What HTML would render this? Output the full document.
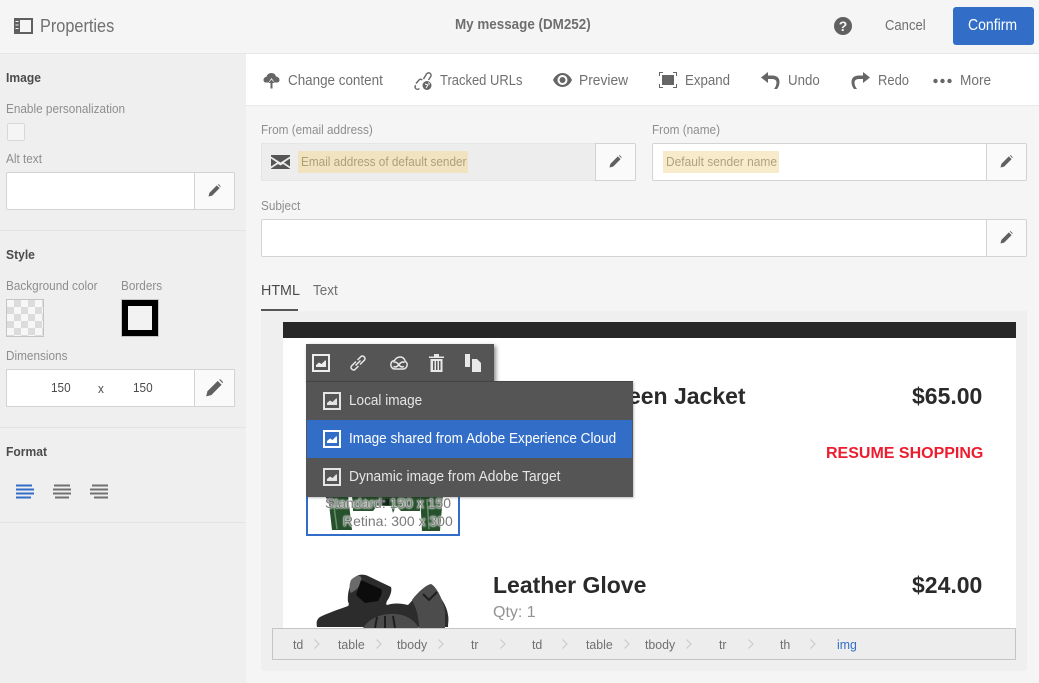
<!DOCTYPE html>
<html><head><meta charset="utf-8"><style>
html,body{margin:0;padding:0;width:1039px;height:683px;overflow:hidden;background:#f5f5f5;font-family:"Liberation Sans",sans-serif}
div,span,svg{position:absolute;box-sizing:border-box}
.t{white-space:nowrap;line-height:20px;transform:scaleX(.905);transform-origin:0 50%}
.n{transform:none}
.lab{font-size:13px;color:#8e8e8e}
.h{font-size:13px;font-weight:bold;color:#4b4b4b;transform:scaleX(.93)}
.tb{font-size:15px;color:#707070;transform:scaleX(.885)}
.ed{border:1px solid #d3d3d3;border-radius:2px;background:#fff}
.pb{background:#fafafa;border:1px solid #d3d3d3;border-radius:0 2px 2px 0}
.bc{font-size:13px;color:#707070;transform:scaleX(.95)}
.c{width:6px;height:10px;top:639px}
.b{font-size:23px;font-weight:bold;color:#2a2a2a;line-height:24px;transform:none}
</style></head><body>
<svg width="0" height="0" style="position:absolute"><defs>
<symbol id="pen" viewBox="0 0 14 14"><path d="M0.500 13.500l1-4 8-8 3 3-8 8z" fill="#606060"/><path d="M10.500 0.500l1-.3 2.100 2.100-.3 1z" fill="#606060"/></symbol>
<symbol id="imgi" viewBox="0 0 18 18"><path fill-rule="evenodd" d="M0 0h18v18H0zM2 2v14h14V2z" fill="currentColor"/><path d="M4 13v-2l3-2.500 2.500 1.500L13 6.500h1V13z" fill="currentColor"/></symbol>
<symbol id="chev" viewBox="0 0 6 10"><path d="M.5.500L5 5 .5 9.500" fill="none" stroke="#c8c8c8" stroke-width="1"/></symbol>
</defs></svg>

<!-- top bar -->
<div style="left:0;top:0;width:1039px;height:54px;background:#f5f5f5;border-bottom:1px solid #e6e6e6"></div>
<svg style="left:14px;top:18px" width="19" height="16" viewBox="0 0 19 16"><path fill-rule="evenodd" d="M0 0h19v16H0zM6 2v12h11V2z" fill="#606060"/><path d="M1.500 3.500h3M1.500 7h3M1.500 10.500h3" stroke="#f5f5f5" stroke-width="1"/></svg>
<span class="t" style="left:40px;top:16px;font-size:18px;color:#707070">Properties</span>
<span class="t" style="left:455px;top:15px;font-size:14.500px;font-weight:bold;color:#6e6e6e;transform:scaleX(.925)">My message (DM252)</span>
<div style="left:834px;top:17px;width:18px;height:18px;border-radius:50%;background:#606060;color:#f5f5f5;font-size:14px;font-weight:bold;line-height:18px;text-align:center">?</div>
<span class="t" style="left:885px;top:16px;font-size:15px;color:#707070;transform:scaleX(.87)">Cancel</span>
<div style="left:953px;top:7px;width:81px;height:38px;background:#326ec8;border-radius:3px"></div>
<span class="t" style="left:968px;top:16px;color:#fff;font-size:15.500px;">Confirm</span>

<!-- left panel -->
<div style="left:0;top:54px;width:246px;height:629px;background:#efefef"></div>
<span class="t h" style="left:6px;top:68px">Image</span>
<span class="t lab" style="left:6px;top:99px">Enable personalization</span>
<div style="left:7px;top:123px;width:18px;height:18px;background:#f5f5f5;border:1px solid #d8d8d8;border-radius:2px"></div>
<span class="t lab" style="left:6px;top:149px">Alt text</span>
<div class="ed" style="left:6px;top:172px;width:189px;height:38px;border-radius:2px 0 0 2px"></div>
<div class="pb" style="left:194px;top:172px;width:41px;height:38px"></div>
<svg style="left:208px;top:184px" width="13" height="13"><use href="#pen"/></svg>
<div style="left:0;top:230px;width:246px;height:1px;background:#e3e3e3"></div>
<span class="t h" style="left:6px;top:245px">Style</span>
<span class="t lab" style="left:6px;top:276px">Background color</span>
<span class="t lab" style="left:121px;top:276px">Borders</span>
<div style="left:6px;top:299px;width:38px;height:38px;border:1px solid #c4c4c4;background:#f2f2f2 conic-gradient(#dcdcdc 25%,#f7f7f7 0 50%,#dcdcdc 0 75%,#f7f7f7 0) 0 0/14px 14px"></div>
<div style="left:121px;top:299px;width:38px;height:38px;border:1px solid #c4c4c4;background:#000"><div style="left:6px;top:6px;width:24px;height:24px;background:#f2f2f2"></div></div>
<span class="t lab" style="left:6px;top:346px">Dimensions</span>
<div class="ed" style="left:6px;top:369px;width:189px;height:38px;border-radius:0"></div>
<div class="pb" style="left:194px;top:369px;width:41px;height:38px;border-radius:0"></div>
<svg style="left:205px;top:379px" width="19" height="18"><use href="#pen"/></svg>
<span class="t" style="left:51px;top:378px;font-size:13px;color:#4b4b4b">150</span>
<span class="t" style="left:98px;top:379px;font-size:13px;color:#4b4b4b">x</span>
<span class="t" style="left:133px;top:378px;font-size:13px;color:#4b4b4b">150</span>
<div style="left:0;top:427px;width:246px;height:1px;background:#e3e3e3"></div>
<span class="t h" style="left:6px;top:442px">Format</span>
<svg style="left:16px;top:484px" width="94" height="17">
<g stroke="#326ec8" stroke-width="2"><path d="M0 1.500h16M0 5.500h18M0 9.500h18M0 13.500h15"/></g>
<g stroke="#707070" stroke-width="2"><path d="M38 1.500h16M37 5.500h18M37 9.500h18M39 13.500h14"/></g>
<g stroke="#707070" stroke-width="2"><path d="M76 1.500h16M74 5.500h18M74 9.500h18M78 13.500h14"/></g>
</svg>
<div style="left:0;top:522px;width:246px;height:1px;background:#e3e3e3"></div>

<!-- toolbar -->
<div style="left:246px;top:54px;width:793px;height:52px;background:#fff;border-bottom:1px solid #e9e9e9"></div>
<svg style="left:263px;top:72px" width="17" height="17" viewBox="0 0 17 17"><path d="M8.500 1c2.500 0 4 1.500 4.500 3.500 2 .2 3.500 1.700 3.500 3.500 0 1.700-1.100 2.500-2.500 2.500h-2.500L8.500 6 5.500 10.500H3C1.500 10.500.5 9.500.5 8c0-1.600 1.200-2.900 3-3.200C4 2.500 6 1 8.500 1z" fill="#666"/><path d="M8.500 7.500l3 3.500h-2v5.500h-2V11h-2z" fill="#666"/></svg>
<span class="t tb" style="left:288px;top:71px;transform:scaleX(.895)">Change content</span>
<svg style="left:414px;top:71px" width="19" height="20" viewBox="0 0 19 20" fill="none"><path d="M2 12.500l3-3.500c1-1 2.200-1 3.200 0M5.500 17.500c-1.500 1.200-3 1-3.800 0-.8-1-.8-2.300 0-3.300M9.500 8l3-5c1-1.300 2.600-1.500 3.700-.6 1.100.9 1.100 2.400.3 3.500L14.500 9" stroke="#666" stroke-width="1.400"/><circle cx="13" cy="14.500" r="4.500" fill="#666"/><path d="M11 13l3 1-2 3M14.500 11.500l1 2" stroke="#fff" stroke-width="1"/></svg>
<span class="t tb" style="left:440px;top:71px;transform:scaleX(.865)">Tracked URLs</span>
<svg style="left:553px;top:73px" width="19" height="14" viewBox="0 0 19 14"><path fill-rule="evenodd" d="M9.500 0C14 0 17.500 3.500 19 7c-1.500 3.500-5 7-9.500 7S1.500 10.500 0 7C1.500 3.500 5 0 9.500 0zm0 2a5 5 0 1 0 0 10 5 5 0 0 0 0-10z" fill="#666"/><circle cx="9.500" cy="7" r="3" fill="#666"/></svg>
<span class="t tb" style="left:579px;top:71px;transform:scaleX(.92)">Preview</span>
<svg style="left:659px;top:72px" width="18" height="16" viewBox="0 0 18 16"><rect x="3" y="3" width="12" height="10" fill="#666"/><path d="M.5 4V.5H4M14 .5h3.500V4M17.500 12v3.500H14M4 15.500H.5V12" stroke="#666" fill="none"/></svg>
<span class="t tb" style="left:685px;top:71px">Expand</span>
<svg style="left:761px;top:72px" width="19" height="17" viewBox="0 0 19 17"><path d="M0 5.500L7 0v3.500h4c5 0 7.500 2.500 7.500 6.500 0 3-1 5-2.500 7h-3c1.500-2 2.500-4 2.500-6.500 0-2-1.500-3.500-4.500-3.500H7V11z" fill="#666"/></svg>
<span class="t tb" style="left:788px;top:71px">Undo</span>
<svg style="left:851px;top:72px" width="19" height="17" viewBox="0 0 19 17"><path d="M19 5.500L12 0v3.500H8C3 3.500.5 6 .5 10c0 3 1 5 2.500 7h3C4.500 15 3.500 13 3.500 10.500c0-2 1.500-3.500 4.500-3.500h4V11z" fill="#666"/></svg>
<span class="t tb" style="left:878px;top:71px;transform:scaleX(.865)">Redo</span>
<svg style="left:933px;top:78px" width="19" height="6"><circle cx="2.500" cy="3" r="2.200" fill="#666"/><circle cx="9.500" cy="3" r="2.200" fill="#666"/><circle cx="16.500" cy="3" r="2.200" fill="#666"/></svg>
<span class="t tb" style="left:960px;top:71px;transform:scaleX(.91)">More</span>

<!-- form -->
<span class="t lab" style="left:261px;top:120px">From (email address)</span>
<div style="left:261px;top:143px;width:335px;height:38px;background:#ededed;border:1px solid #e5e5e5"></div>
<div class="pb" style="left:595px;top:143px;width:41px;height:38px"></div>
<svg style="left:609px;top:155px" width="13" height="13"><use href="#pen"/></svg>
<svg style="left:271px;top:155px" width="19" height="14" viewBox="0 0 19 14"><path d="M0 0h19v1.500L9.500 7.500 0 1.500zM0 3.500L6 7.500 0 11.500zM19 3.500l-6 4 6 4zM0 13.500L7 9l2.500 1.500L12 9l7 4.500V14H0z" fill="#555"/></svg>
<div style="left:298px;top:151px;width:170px;height:22px;background:#f1e3c0"></div>
<span class="t" style="left:301px;top:152px;font-size:13px;color:#ad9f78">Email address of default sender</span>
<span class="t lab" style="left:652px;top:120px">From (name)</span>
<div class="ed" style="left:652px;top:143px;width:335px;height:38px;border-radius:2px 0 0 2px"></div>
<div class="pb" style="left:986px;top:143px;width:41px;height:38px"></div>
<svg style="left:1000px;top:155px" width="13" height="13"><use href="#pen"/></svg>
<div style="left:663px;top:151px;width:116px;height:22px;background:#f8ebcb"></div>
<span class="t" style="left:666px;top:152px;font-size:13px;color:#ada37f;transform:scaleX(.92)">Default sender name</span>
<span class="t lab" style="left:261px;top:196px">Subject</span>
<div class="ed" style="left:261px;top:219px;width:726px;height:38px;border-radius:2px 0 0 2px"></div>
<div class="pb" style="left:986px;top:219px;width:41px;height:38px"></div>
<svg style="left:1000px;top:231px" width="13" height="13"><use href="#pen"/></svg>
<span class="t n" style="left:261px;top:281px;font-size:14.300px;color:#4b4b4b">HTML</span>
<div style="left:261px;top:309px;width:37px;height:2px;background:#555"></div>
<span class="t" style="left:313px;top:281px;font-size:14.500px;color:#707070;transform:scaleX(.93)">Text</span>

<!-- preview -->
<div style="left:261px;top:311px;width:766px;height:360px;background:#efefef;border-radius:0 0 3px 3px"></div>
<div style="left:283px;top:322px;width:733px;height:306px;background:#fff"></div>
<div style="left:283px;top:322px;width:733px;height:16px;background:#272727"></div>
<span class="t b" style="left:619px;top:384px">reen Jacket</span>
<span class="t b" style="left:912px;top:384px">$65.00</span>
<span class="t n" style="left:826px;top:444px;font-size:16px;font-weight:bold;color:#ed1c2e">RESUME SHOPPING</span>
<span class="t b" style="left:493px;top:573px">Leather Glove</span>
<span class="t b" style="left:912px;top:573px">$24.00</span>
<span class="t n" style="left:493px;top:603px;font-size:16px;color:#929292">Qty: 1</span>

<!-- jacket -->
<div style="left:306px;top:490px;width:154px;height:46px;background:#fff;border:2px solid #326ec8;border-top:0"></div>
<svg style="left:325px;top:495px" width="120" height="38" viewBox="0 0 120 38"><path d="M3 0h20l4 35H7zM27 0h68v16H76l-5-5-3 7-2-7H52l-4 5H28zM95 0h23l-3 36H97z" fill="#27502c"/><path d="M8 4l4 30M102 4l2 30M40 3l4 10M80 3l-3 10" stroke="#a9c9a5" stroke-width="1.500" fill="none" opacity=".5"/><path d="M0 0h6l4 10-5 2zM52 4h12v6H52z" fill="#13231a"/></svg>
<span class="t n" style="left:325px;top:493px;font-size:14px;color:#7a7a7a;text-shadow:0 0 2px #fff,0 0 2px #fff,0 0 1px #fff">Standard: 150 x 150</span>
<span class="t n" style="left:343px;top:511px;font-size:14px;color:#7a7a7a;text-shadow:0 0 2px #fff,0 0 2px #fff,0 0 1px #fff">Retina: 300 x 300</span>

<!-- glove -->
<svg style="left:315px;top:572px" width="142" height="56" viewBox="0 0 142 56"><path d="M2 55c-1-5 0-8 3-10 8-4 17-7 28-11 1-1 1-3 0-4-1-8 2-20 7-25 4-3 9-3 13-1l23 11c1 3 0 8-4 14-1 2-1 4 0 4 6-2 13-2 21 0 5-5 11-13 18-18 3-1 8 2 11 6 5 6 10 14 11 22 1 4 0 8 0 12z" fill="#2c2c2c"/><path d="M36 8c4-4 8-5 10-3 1 2 1 6-4 12l-6 4c-2-3-2-8 0-13z" fill="#6a6a6a"/><path d="M46 8l20 9c2 3 0 7-3 12l-13 2-9-8z" fill="#0c0c0c"/><path d="M48 56c5-8 14-13 26-14 14-1 24 4 30 14zM97 28c6-8 14-15 19-16 6 3 12 16 14 27v17H104c0-12-3-20-7-28z" fill="#4c4c4c"/><path d="M62 45l-2 11M70 44v12M78 44l2 12M108 22l6 6 8-8" stroke="#1e1e1e" stroke-width="2" fill="none"/></svg>

<!-- popup -->
<div style="left:306px;top:344px;width:188px;height:38px;background:#555;box-shadow:2px 2px 4px rgba(0,0,0,.45)"></div>
<svg style="left:312px;top:354px;color:#ededed" width="18" height="18"><use href="#imgi"/></svg>
<svg style="left:349px;top:354px" width="18" height="18" viewBox="0 0 18 18" fill="none" stroke="#e8e8e8" stroke-width="1.500"><path d="M6.500 11.500l5-5M7 7.500L2.500 12c-1.800 2 1.500 5.200 3.500 3.500L9.500 12M8.500 6L12 2.500c2-1.800 5.200 1.500 3.500 3.500L11 10.500"/></svg>
<svg style="left:390px;top:356px" width="18" height="14" viewBox="0 0 18 14" fill="none" stroke="#e8e8e8" stroke-width="1.500"><path d="M5 13C2 13 .8 10.500.8 8.500c0-2.500 2-4 3.700-4C6 2 8 .8 10.500 1c3 .2 4.500 2.500 4.700 4.500 1.500.7 2 2 2 3.300 0 2.500-2 4.200-4 4.200z"/><path d="M3.500 10.500c2 1 4 0 5.500-2s3.500-3 5.500-2M14 10.500c-2 1-4 0-5.500-2S5 5.500 3.500 6.500"/></svg>
<svg style="left:429px;top:354px" width="15" height="18" viewBox="0 0 15 18" fill="#e8e8e8"><path d="M0 2.500h5V0h5v2.500h5V4H0zM1.500 5h12v13h-12zM4 7v9h1.500V7zm3 0v9h1.500V7zm3 0v9h1.500V7z" fill-rule="evenodd"/></svg>
<svg style="left:464px;top:354px" width="18" height="19" viewBox="0 0 18 19" fill="#e8e8e8"><path d="M1 0h5v13H1zM8 5h5l4 4v9H8z"/></svg>
<div style="left:306px;top:381px;width:327px;height:116px;background:#555;border-top:1px solid #444;box-shadow:1px 1px 2px rgba(0,0,0,.25)"></div>
<div style="left:307px;top:420px;width:325px;height:38px;background:#326ec8"></div>
<svg style="left:323px;top:392px;color:#e4e4e4" width="18" height="18"><use href="#imgi"/></svg>
<svg style="left:323px;top:430px;color:#fff" width="18" height="18"><use href="#imgi"/></svg>
<svg style="left:323px;top:468px;color:#e4e4e4" width="18" height="18"><use href="#imgi"/></svg>
<span class="t" style="left:349px;top:391px;font-size:15px;color:#e6e6e6">Local image</span>
<span class="t" style="left:349px;top:429px;font-size:15px;color:#fff">Image shared from Adobe Experience Cloud</span>
<span class="t" style="left:349px;top:467px;font-size:15px;color:#e6e6e6;transform:scaleX(.92)">Dynamic image from Adobe Target</span>

<!-- breadcrumbs -->
<div style="left:272px;top:628px;width:744px;height:32px;background:#ededed;border:1px solid #c6c6c6"></div>
<span class="t bc" style="left:293px;top:635px">td</span><svg class="c" style="left:314px"><use href="#chev"/></svg>
<span class="t bc" style="left:338px;top:635px">table</span><svg class="c" style="left:376px"><use href="#chev"/></svg>
<span class="t bc" style="left:397px;top:635px">tbody</span><svg class="c" style="left:438px"><use href="#chev"/></svg>
<span class="t bc" style="left:471px;top:635px">tr</span><svg class="c" style="left:500px"><use href="#chev"/></svg>
<span class="t bc" style="left:532px;top:635px">td</span><svg class="c" style="left:562px"><use href="#chev"/></svg>
<span class="t bc" style="left:586px;top:635px">table</span><svg class="c" style="left:624px"><use href="#chev"/></svg>
<span class="t bc" style="left:645px;top:635px">tbody</span><svg class="c" style="left:686px"><use href="#chev"/></svg>
<span class="t bc" style="left:719px;top:635px">tr</span><svg class="c" style="left:748px"><use href="#chev"/></svg>
<span class="t bc" style="left:780px;top:635px">th</span><svg class="c" style="left:810px"><use href="#chev"/></svg>
<span class="t bc" style="left:837px;top:635px;color:#326ec8">img</span>
</body></html>
